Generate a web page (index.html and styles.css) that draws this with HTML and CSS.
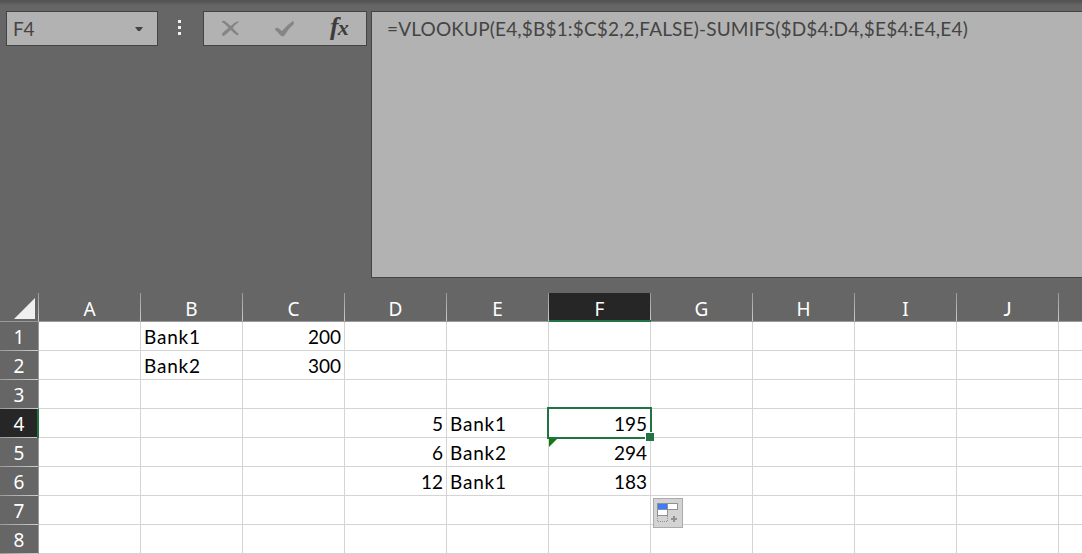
FILE: index.html
```
<!DOCTYPE html>
<html lang="en">
<head>
  <meta charset="UTF-8">
  <title>Book1</title>
  <link rel="stylesheet" href="styles.css">
</head>
<body>
  <div class="formula-bar">
    <div class="name-box">
      <span>F4</span>
      <svg width="8" height="4" viewBox="0 0 8 4"><path d="M0 0h8L5 4H3z" fill="#444"/></svg>
    </div>
    <div class="dots"><i></i><i></i><i></i></div>
    <div class="buttons">
      <svg width="162" height="33" viewBox="0 0 162 33">
        <path d="M18 10Q18 8 21 9Q24 11 27 14Q31 10 35 9L35 10Q31 13 29 16Q32 19 35 22Q35 24 33 23Q30 21 27 18Q24 21 20 24Q18 24 18 22Q21 18 25 16Q22 12 18 10z" fill="#858585"/>
        <path d="M72 17Q73 15 75 16L79 19Q84 13 90 9L91 10V12Q85 17 81 24Q79 25 77 23Q75 20 72 18z" fill="#858585"/>
      </svg>
      <span class="fx"><b>f</b><b class="x">x</b></span>
    </div>
    <div class="formula"><span>=VLOOKUP(E4,$B$1:$C$2,2,FALSE)-SUMIFS($D$4:D4,$E$4:E4,E4)</span></div>
  </div>

  <table class="sheet">
    <thead>
      <tr>
        <th class="corner"><svg width="21" height="21" viewBox="0 0 21 21"><path d="M0 21L21 0v21z" fill="#f0f0f0"/></svg></th>
        <th>A</th><th>B</th><th>C</th><th>D</th><th>E</th><th class="active">F</th><th>G</th><th>H</th><th>I</th><th class="j">J</th><th class="last"></th>
      </tr>
    </thead>
    <tbody>
      <tr><th>1</th><td></td><td>Bank1</td><td class="num">200</td><td></td><td></td><td></td><td></td><td></td><td></td><td></td><td></td></tr>
      <tr><th>2</th><td></td><td>Bank2</td><td class="num">300</td><td></td><td></td><td></td><td></td><td></td><td></td><td></td><td></td></tr>
      <tr><th>3</th><td></td><td></td><td></td><td></td><td></td><td></td><td></td><td></td><td></td><td></td><td></td></tr>
      <tr><th class="active">4</th><td></td><td></td><td></td><td class="num">5</td><td>Bank1</td><td class="num selected">195</td><td></td><td></td><td></td><td></td><td></td></tr>
      <tr><th>5</th><td></td><td></td><td></td><td class="num">6</td><td>Bank2</td><td class="num warning">294</td><td></td><td></td><td></td><td></td><td></td></tr>
      <tr><th>6</th><td></td><td></td><td></td><td class="num">12</td><td>Bank1</td><td class="num">183</td><td></td><td></td><td></td><td></td><td></td></tr>
      <tr><th>7</th><td></td><td></td><td></td><td></td><td></td><td></td>
        <td>
          <svg class="autofill" width="30" height="30" viewBox="0 0 30 30" shape-rendering="crispEdges">
            <rect x=".5" y=".5" width="29" height="29" fill="#d3d3d3" stroke="#ababab"/>
            <path d="M4 5h21v7H15v6H4z" fill="#919191"/>
            <path d="M5 6h9v5H5z" fill="#3b7dff"/>
            <path d="M15 6h9v5h-9zM5 12h9v5H5z" fill="#fff"/>
            <path d="M4.500 18v5.500h10V18" fill="none" stroke="#919191" stroke-dasharray="1 1"/>
            <path d="M18 21h6M21 18v6" stroke="#919191" stroke-width="2"/>
          </svg>
        </td>
        <td></td><td></td><td></td><td></td></tr>
      <tr><th>8</th><td></td><td></td><td></td><td></td><td></td><td></td><td></td><td></td><td></td><td></td><td></td></tr>
    </tbody>
  </table>
</body>
</html>
```
FILE: styles.css
```
* {
  box-sizing: border-box;
}

body {
  margin: 0;
  width: 1082px;
  height: 554px;
  overflow: hidden;
  background: #666;
  font-family: Lato, "Liberation Sans", sans-serif;
}

.formula-bar {
  display: flex;
  align-items: flex-start;
  height: 293px;
  padding: 11px 0 0 6px;
  background: linear-gradient(#525252, #5a5a5a 3px, #666 5px);
}

.name-box {
  display: flex;
  align-items: center;
  justify-content: space-between;
  width: 152px;
  height: 35px;
  padding: 0 14px 0 6px;
  border: 1px solid #444;
  background: #b2b2b2;
  color: #444;
  font-size: 19px;
  letter-spacing: -0.3px;
}

.dots {
  display: flex;
  flex-direction: column;
  gap: 3px;
  width: 45px;
  padding: 9px 0 0 20px;
}

.dots i {
  width: 3px;
  height: 3px;
  background: #f0f0f0;
}

.buttons {
  display: flex;
  width: 164px;
  height: 35px;
  border: 1px solid #444;
  background: #b2b2b2;
}

.fx {
  flex: none;
  width: 36px;
  margin-left: -34px;
  color: #3c3c3c;
  font: italic 26px/29px "Liberation Serif", serif;
  white-space: nowrap;
}

.fx .x {
  margin-left: -1px;
  font-size: 22px;
}

.formula {
  flex: 1;
  height: 267px;
  margin-left: 4px;
  padding: 4px 0 0 15px;
  border: 1px solid #444;
  border-right: none;
  background: #b2b2b2;
  color: #444;
  font-size: 19px;
  line-height: 25px;
  letter-spacing: 0.17px;
  white-space: nowrap;
}

.sheet {
  width: 1082px;
  table-layout: fixed;
  border-collapse: separate;
  border-spacing: 0;
  background: #fff;
}

.sheet th,
.sheet td {
  width: 102px;
  height: 29px;
  padding: 0;
  line-height: 26px;
}

.sheet th {
  background: #666;
  color: #fff;
  font: 19px/26px "Noto Sans", sans-serif;
}

.sheet thead th {
  padding: 4px 1px 0 0;
  background: linear-gradient(#999, #ccc) right / 1px 100% no-repeat #666;
  border-bottom: 1px solid #999;
  line-height: 24px;
}

.sheet tbody th {
  border-right: 1px solid #999;
  background: linear-gradient(to right, #999, #ccc) bottom / 100% 1px no-repeat #666;
}

.sheet th:first-child {
  width: 39px;
}

.sheet thead .last {
  width: 23px;
  background: #666;
}

.sheet thead .corner {
  padding: 3px 4px 0 0;
  line-height: 0;
  text-align: right;
}

.sheet thead .active {
  background-color: #262626;
  border-bottom-color: #217346;
  box-shadow: inset 0 -1px #217346;
}

.sheet tbody .active {
  background-color: #262626;
  border-right-color: #217346;
  box-shadow: inset -1px 0 #217346;
}

.sheet thead .j {
  font-family: Lato, sans-serif;
}

.sheet td {
  position: relative;
  padding: 1px 3px 0;
  border-right: 1px solid #d4d4d4;
  border-bottom: 1px solid #d4d4d4;
  color: #000;
  font-size: 19px;
  letter-spacing: 0.8px;
}

.sheet td:last-child {
  border-right: none;
}

.sheet .num {
  letter-spacing: 0;
  text-align: right;
}

/* selection frame with its fill handle */
.selected::before {
  content: "";
  position: absolute;
  z-index: 1;
  inset: -2px;
  border: 2px solid #217346;
}

.selected::after {
  content: "";
  position: absolute;
  z-index: 2;
  right: -4px;
  bottom: -4px;
  width: 8px;
  height: 8px;
  border: solid #fff;
  border-width: 1px 0 0 1px;
  background: #217346;
}

.warning::before {
  content: "";
  position: absolute;
  top: 1px;
  left: 0;
  border-top: 8px solid #107c10;
  border-right: 8px solid transparent;
}

.autofill {
  position: absolute;
  z-index: 3;
  top: 2px;
  left: 2px;
}
```
